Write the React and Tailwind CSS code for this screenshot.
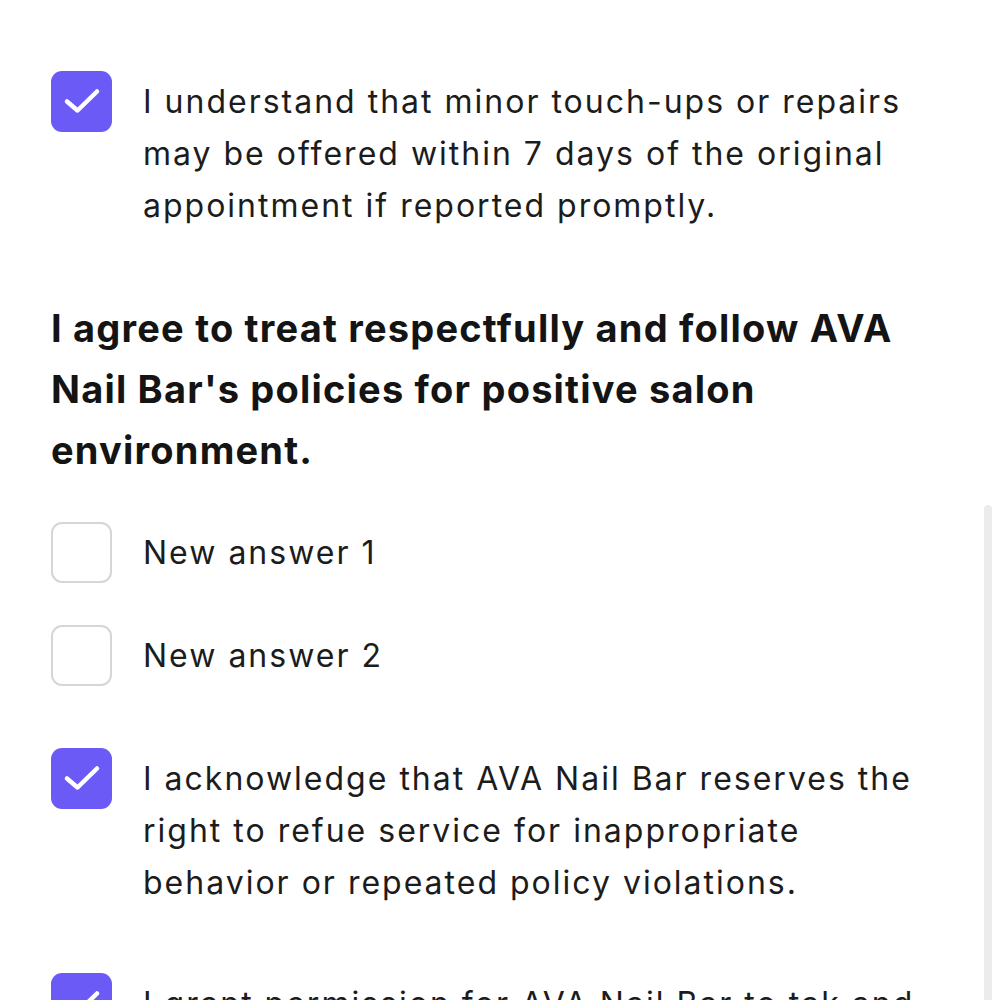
import React from 'react'

const Check = () => (
  <svg width="61" height="61" viewBox="0 0 61 61" className="block">
    <polyline
      points="16,30.5 26.5,39.5 46,20.5"
      fill="none"
      stroke="#ffffff"
      strokeWidth="4.5"
      strokeLinecap="round"
      strokeLinejoin="round"
    />
  </svg>
)

const Box = ({ checked }) =>
  checked ? (
    <div className="w-[61px] h-[61px] shrink-0 rounded-[11px] bg-[#6b5af5]">
      <Check />
    </div>
  ) : (
    <div className="w-[61px] h-[61px] shrink-0 rounded-[11px] border-2 border-[#d6d6d6] bg-white" />
  )

const Option = ({ checked, children, className = '' }) => (
  <div className={`flex items-start gap-[31px] ${className}`}>
    <Box checked={checked} />
    <p className="mt-[5px] text-[32px] leading-[52px] tracking-[2px] text-[#1c1c1c] pr-[20px]">{children}</p>
  </div>
)

export default function App() {
  return (
    <div
      className="relative w-[1000px] h-[1000px] overflow-hidden bg-white"
      style={{ fontFamily: 'Inter, "Noto Sans", sans-serif' }}
    >
      {/* scrollbar */}
      <div className="absolute right-[8px] top-[505px] w-[8px] h-[520px] rounded-full bg-[#ececec]" />

      <div className="pl-[51px] pr-[40px]">
        <Option checked className="mt-[71px]">
          I understand that minor touch-ups or repairs may be offered within 7 days of the original appointment if
          reported promptly.
        </Option>

        <h2 className="mt-[66px] text-[38px] leading-[61px] font-bold text-[#141414] pr-[50px] tracking-[1.2px]">
          I agree to treat respectfully and follow AVA Nail Bar's policies for positive salon environment.
        </h2>

        <Option className="mt-[41px]">New answer 1</Option>
        <Option className="mt-[42px]">New answer 2</Option>

        <Option checked className="mt-[62px]">
          I acknowledge that AVA Nail Bar reserves the right to refue service for inappropriate behavior or repeated
          policy violations.
        </Option>

        <Option checked className="mt-[64px]">
          I grant permission for AVA Nail Bar to tak and use photos of my nails for promotional purposes.
        </Option>
      </div>
    </div>
  )
}
